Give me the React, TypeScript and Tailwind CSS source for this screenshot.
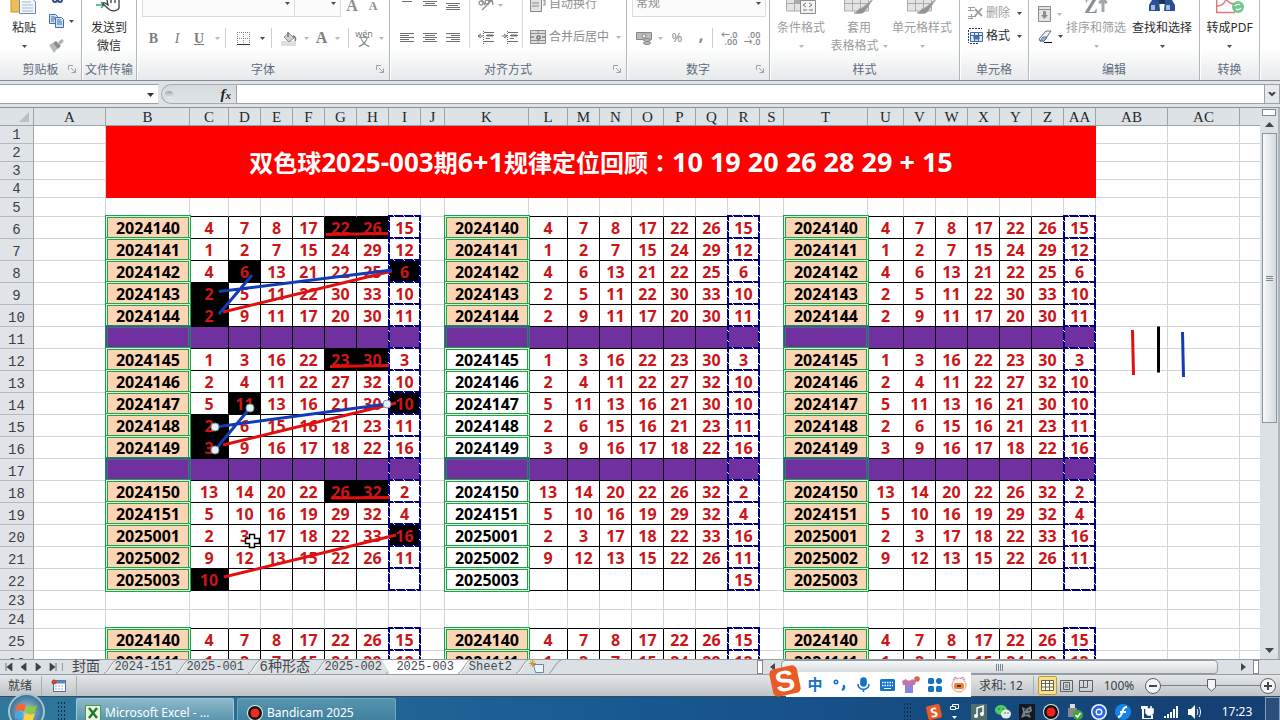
import type { ReactNode } from "react";

const columns = [
  ["A", 72], ["B", 84], ["C", 39], ["D", 32], ["E", 32], ["F", 32], ["G", 32], ["H", 32], ["I", 32], ["J", 24],
  ["K", 84], ["L", 39], ["M", 32], ["N", 32], ["O", 32], ["P", 32], ["Q", 32], ["R", 32], ["S", 24],
  ["T", 84], ["U", 36], ["V", 32], ["W", 32], ["X", 32], ["Y", 32], ["Z", 32], ["AA", 32], ["AB", 72], ["AC", 72],
] as const;

interface Draw {
  row: number;
  id: string;
  nums: (number | string)[];
}

const none = ["", "", "", "", "", "", ""];

const draws: Draw[] = [
  { row: 6, id: "2024140", nums: [4, 7, 8, 17, 22, 26, 15] },
  { row: 7, id: "2024141", nums: [1, 2, 7, 15, 24, 29, 12] },
  { row: 8, id: "2024142", nums: [4, 6, 13, 21, 22, 25, 6] },
  { row: 9, id: "2024143", nums: [2, 5, 11, 22, 30, 33, 10] },
  { row: 10, id: "2024144", nums: [2, 9, 11, 17, 20, 30, 11] },
  { row: 11, id: "", nums: none },
  { row: 12, id: "2024145", nums: [1, 3, 16, 22, 23, 30, 3] },
  { row: 13, id: "2024146", nums: [2, 4, 11, 22, 27, 32, 10] },
  { row: 14, id: "2024147", nums: [5, 11, 13, 16, 21, 30, 10] },
  { row: 15, id: "2024148", nums: [2, 6, 15, 16, 21, 23, 11] },
  { row: 16, id: "2024149", nums: [3, 9, 16, 17, 18, 22, 16] },
  { row: 17, id: "", nums: none },
  { row: 18, id: "2024150", nums: [13, 14, 20, 22, 26, 32, 2] },
  { row: 19, id: "2024151", nums: [5, 10, 16, 19, 29, 32, 4] },
  { row: 20, id: "2025001", nums: [2, 3, 17, 18, 22, 33, 16] },
  { row: 21, id: "2025002", nums: [9, 12, 13, 15, 22, 26, 11] },
  { row: 22, id: "2025003", nums: none },
  { row: 25, id: "2024140", nums: [4, 7, 8, 17, 22, 26, 15] },
  { row: 26, id: "2024141", nums: [1, 2, 7, 15, 24, 29, 12] },
];

// cells filled black in the first block, as row:index
const marked = new Set([
  "6:4", "6:5", "8:1", "8:6", "9:0", "10:0", "12:4", "12:5", "14:1", "14:6",
  "15:0", "16:0", "18:4", "18:5", "20:6", "22:0",
]);

const grid = "border-r border-b border-[#d3d6d9]";
const ui = "font-['Noto_Sans','Noto_Sans_CJK_SC',sans-serif]";
const mono = "font-['Liberation_Mono','Noto_Sans_CJK_SC',monospace]";

function Arrow({ dim = false }: { dim?: boolean }) {
  return (
    <svg width="5" height="3" viewBox="0 0 5 3" className="shrink-0">
      <path d="M0 0h5L2.5 3z" fill={dim ? "#b5b8bb" : "#4a4d50"} />
    </svg>
  );
}

function Group({ name, width, launcher, children }: { name: string; width: string; launcher?: boolean; children: ReactNode }) {
  return (
    <section className={`flex h-full shrink-0 flex-col border-r border-[#b3b8bd] shadow-[1px_0_0_#fff] ${width}`}>
      <div className="flex h-[59px] items-end">{children}</div>
      <div className="relative h-[21px] text-center text-[12px] leading-[22px] whitespace-nowrap text-[#5f6b7d]">
        {name}
        {launcher && (
          <button aria-label={`${name} 设置`} className="absolute right-[5px] bottom-[7px]">
            <svg width="8" height="8" viewBox="0 0 8 8" fill="none" stroke="#9aa1a8" className="block">
              <path d="M.5 5V.5H5M3 3l4 4M7.500 3.500v4h-4" />
            </svg>
          </button>
        )}
      </div>
    </section>
  );
}

function Tool({ label, w, children }: { label: string; w: string; children: ReactNode }) {
  return (
    <button aria-label={label} className={`flex h-full shrink-0 items-center justify-center ${w}`}>
      {children}
    </button>
  );
}

function Sep() {
  return <span className="h-5 w-px shrink-0 bg-[#cdd0d3]" />;
}

function Lines({ rows }: { rows: [number, number][] }) {
  return (
    <svg width="14" height="12" viewBox="0 0 14 12" stroke="#6d7073">
      {rows.map(([a, b], i) => (
        <path key={i} d={`M${a} ${i * 2 + 1.5}H${b}`} />
      ))}
    </svg>
  );
}

function Big({ label, second, w, dim, children }: { label: string; second?: string; w: string; dim?: boolean; children: ReactNode }) {
  return (
    <button className={`flex h-[59px] shrink-0 flex-col items-center text-[12px] leading-[18px] whitespace-nowrap ${w} ${dim ? "text-[#9a9da0]" : "text-[#2b2b2b]"}`}>
      <span className="flex h-[19px] items-start">{children}</span>
      <span>{label}</span>
      <span className="flex h-[18px] items-center gap-1">
        {second}
        {second !== "微信" && <Arrow dim={dim} />}
      </span>
    </button>
  );
}

function StyleIcon({ brush }: { brush?: boolean }) {
  return (
    <svg width="30" height="14" viewBox="0 0 30 14" fill="#e4e4e4" stroke="#a9acaf">
      <path d="M.5 -3v14h24v-14M.5 3.500h24M8.500 -3v14M16.500 -3v14" />
      {brush ? (
        <path d="M29 -1l-11 9c-4 0-4 4-8 5 4 1 9 1 11-2z" fill="#909396" />
      ) : (
        <>
          <path d="M9 -3h7v6H9z" fill="#aaa" />
          <path d="M14.500 .5h15v13h-15z" fill="#f3f3f3" stroke="#8c8f92" />
          <path d="M20 3l-3 2 3 2M17 10h4M23 3l3 2-3 2M23 10h4" fill="none" stroke="#777" />
        </>
      )}
    </svg>
  );
}

function Ribbon() {
  return (
    <header className={`flex h-[81px] shrink-0 overflow-hidden border-b border-[#868c92] bg-linear-to-b from-white from-60% to-[#e6e9eb] ${ui}`}>
      <Group name="剪贴板" width="w-[82px]" launcher>
        <Big label="粘贴" w="w-[48px]">
          <svg width="28" height="15" viewBox="0 0 28 15">
            <path d="M1 -2h9v14H1z" fill="#efbd55" stroke="#c99530" />
            <path d="M9.500 -2h12l4 4v11.500h-16z" fill="#f4f8fd" stroke="#7089a8" />
            <path d="M12 2h9M12 5h11M12 8h11M12 11h11" stroke="#9fb5d2" />
          </svg>
        </Big>
        <div className="flex h-[59px] w-[30px] flex-col justify-between pb-[5px]">
          <svg width="18" height="4" viewBox="0 0 18 4" fill="none" stroke="#334a85" strokeWidth="2">
            <circle cx="7" cy="0" r="2" />
            <circle cx="12" cy="0" r="2" />
          </svg>
          <button aria-label="复制" className="flex items-center gap-1">
            <svg width="17" height="14" viewBox="0 0 17 14" fill="#d3e4f8" stroke="#3f6fae">
              <path d="M1.500 .5h6l2 2v7h-8z" />
              <path d="M3 3h4M3 5h4M3 7h3" />
              <path d="M7.500 3.500h6l2 2v8h-8z" />
              <path d="M9 6h4M9 8h5M9 10h5" />
            </svg>
            <Arrow />
          </button>
          <button aria-label="格式刷">
            <svg width="17" height="16" viewBox="0 0 17 16">
              <path d="M1 7l4-2 5 5-4 5z" fill="#b7b9bb" />
              <path d="M5 5l3-2 5 5-3 3z" fill="#888b8e" />
              <path d="M10 4l4-3 2 2-4 4z" fill="#b0b3b6" />
            </svg>
          </button>
        </div>
      </Group>
      <Group name="文件传输" width="w-[55px]">
        <Big label="发送到" second="微信" w="w-[54px]">
          <svg width="28" height="12" viewBox="0 0 28 12" fill="none" stroke="#3a3d40" strokeWidth="1.300">
            <path d="M1 5h8M6 2l3 3-3 3" stroke="#43a573" strokeWidth="1.600" />
            <path d="M12 0l1 5-3-2c-2-1-3 1-1 2l6 5c3 1.500 8 1 9-2V0M16 0v3M20 0v3" />
          </svg>
        </Big>
      </Group>
      <Group name="字体" width="w-[253px]" launcher>
        <div className="flex h-[59px] flex-col pl-[5px]">
          <div className="flex h-[17px] text-[#8a8d90]">
            <div className="relative">
              <select aria-label="字体名称" className="block h-[17px] w-[153px] appearance-none border border-t-0 border-[#dadcde] bg-[#fbfbfb]" />
              <span className="absolute top-[2px] right-[5px] flex"><Arrow /></span>
            </div>
            <div className="relative">
              <select aria-label="字号" className="block h-[17px] w-[46px] appearance-none border border-t-0 border-l-0 border-[#dadcde] bg-[#fbfbfb]" />
              <span className="absolute top-[2px] right-[5px] flex"><Arrow /></span>
            </div>
            <button aria-label="增大字号" className="h-[12px] w-[22px] font-['Liberation_Serif',serif] text-[16px] leading-[8px] font-bold">A</button>
            <button aria-label="减小字号" className="h-[12px] w-[20px] font-['Liberation_Serif',serif] text-[12px] leading-[12px] font-bold">A</button>
          </div>
          <div className="mt-[10px] flex h-[22px] items-center font-['Liberation_Serif',serif] text-[14px] text-[#7b7e81]">
            <Tool label="加粗" w="w-[23px]"><b>B</b></Tool>
            <Tool label="倾斜" w="w-[24px]"><i>I</i></Tool>
            <Tool label="下划线" w="w-[20px]"><b className="underline">U</b></Tool>
            <Tool label="下划线样式" w="w-[16px]"><Arrow dim /></Tool>
            <Sep />
            <Tool label="边框" w="w-[34px]">
              <svg width="13" height="13" viewBox="0 0 13 13" fill="none" stroke="#85888b" strokeDasharray="1 1">
                <path d="M.5 0v12M6.500 0v12M12.500 0v12M0 .5h13M0 6.500h13" />
                <path d="M0 12.500h13" stroke="#333" strokeDasharray="none" />
              </svg>
            </Tool>
            <Tool label="边框样式" w="w-[4px]"><Arrow /></Tool>
            <span className="w-[7px]" />
            <Sep />
            <Tool label="填充颜色" w="w-[32px]">
              <svg width="17" height="15" viewBox="0 0 17 15">
                <path d="M1 10h15v5H1z" fill="#dedede" />
                <path d="M4 6l5-4 5 5-5 4z" fill="#d2d2d2" stroke="#8b8e91" />
                <path d="M8 1v5M13 5c3 1 3 3 2 5" fill="none" stroke="#777" strokeWidth="1.500" />
              </svg>
            </Tool>
            <Tool label="填充样式" w="w-[4px]"><Arrow dim /></Tool>
            <Tool label="字体颜色" w="w-[27px]"><b className="text-[16px]">A</b></Tool>
            <Tool label="字体颜色样式" w="w-[4px]"><Arrow dim /></Tool>
            <span className="w-[9px]" />
            <Sep />
            <Tool label="拼音" w="w-[30px]">
              <span className={`flex flex-col items-center text-[12px] leading-[9px] ${ui}`}>
                <span className="text-[9px] leading-[7px]">wén</span>文
              </span>
            </Tool>
            <Arrow dim />
          </div>
        </div>
      </Group>
      <Group name="对齐方式" width="w-[237px]" launcher>
        <div className="flex h-[59px] pl-[5px] text-[12px] text-[#8b8e91]">
          <div className="flex w-[74px] flex-col">
            <div className="flex h-[27px] items-start">
              <Tool label="顶端对齐" w="w-[23px]"><span className="mb-5"><Lines rows={[[0, 14], [2, 12]]} /></span></Tool>
              <Tool label="垂直居中" w="w-[24px]"><span className="mb-4"><Lines rows={[[0, 14], [2, 12], [0, 14]]} /></span></Tool>
              <Tool label="底端对齐" w="w-[22px]"><span className="mb-3"><Lines rows={[[0, 14], [2, 12], [0, 14], [0, 14]]} /></span></Tool>
            </div>
            <div className="flex h-[22px]">
              <Tool label="左对齐" w="w-[23px]"><Lines rows={[[0, 14], [0, 9], [0, 14], [0, 9], [0, 14]]} /></Tool>
              <Tool label="居中" w="w-[24px]"><Lines rows={[[0, 14], [2, 12], [0, 14], [2, 12], [0, 14]]} /></Tool>
              <Tool label="右对齐" w="w-[22px]"><Lines rows={[[0, 14], [5, 14], [0, 14], [5, 14], [0, 14]]} /></Tool>
            </div>
          </div>
          <div className="flex h-[48px] w-[54px] flex-col justify-between border-r border-l border-[#d5d7d9]">
            <button aria-label="方向" className="flex items-center gap-1 pl-2">
              <svg width="16" height="11" viewBox="0 0 16 11" fill="none" stroke="#8b8e91" strokeWidth="1.300">
                <circle cx="3" cy="3" r="2" /><circle cx="9" cy="2" r="2" />
                <path d="M4 0l3 5M4 10L14 0M14 0l1 5M14 0l-4 1" />
              </svg>
              <Arrow dim />
            </button>
            <div className="flex h-[22px]">
              <Tool label="减少缩进量" w="w-[32px]">
                <svg width="16" height="13" viewBox="0 0 16 13" stroke="#6d7073"><path d="M6 1.500h10M8 4.500h8M8 7.500h4M6 10.500h10M0 5h5M3 3L0 5l3 2" fill="none" /><path d="M9 4.500h6" strokeWidth="2" /><path d="M5.500 0v13" strokeDasharray="1 1" /></svg>
              </Tool>
              <Tool label="增加缩进量" w="w-[16px]">
                <svg width="16" height="13" viewBox="0 0 16 13" stroke="#6d7073"><path d="M6 1.500h10M8 4.500h8M8 7.500h4M6 10.500h10M0 5h5M2 3l3 2-3 2" fill="none" /><path d="M9 4.500h6" strokeWidth="2" /><path d="M5.500 0v13" strokeDasharray="1 1" /></svg>
              </Tool>
            </div>
          </div>
          <div className="flex h-[48px] flex-col justify-between pl-[7px]">
            <button className="flex h-[11px] items-center gap-[3px] leading-[12px]">
              <svg width="16" height="12" viewBox="0 0 16 12" fill="#e3e3e3" stroke="#85888b"><path d="M.5 0v11.500h11V0M2 3h7M2 6h7M13 0h2v5h-2" /></svg>
              <span className="-mt-1">自动换行</span>
            </button>
            <button className="flex h-[22px] items-center gap-[3px]">
              <svg width="16" height="14" viewBox="0 0 16 14" fill="#ddd" stroke="#8b8e91"><path d="M.5 .5h15v13H.5zM.5 3.500h15M.5 10.500h15M8 .5v3M8 10.500v3" /><path d="M1 7h3M15 7h-3M7 6h3v3H7z" stroke="#4d5053" /></svg>
              合并后居中
              <span className="pl-1"><Arrow dim /></span>
            </button>
          </div>
        </div>
      </Group>
      <Group name="数字" width="w-[143px]" launcher>
        <div className="flex h-[59px] flex-col pl-[5px] text-[#8b8e91]">
          <div className="relative h-[17px] w-[134px] overflow-hidden">
            <select aria-label="数字格式" className="absolute bottom-0 h-7 w-full appearance-none border border-[#dadcde] bg-[#fbfbfb] pl-[3px] text-[12px] leading-[16px]">
              <option>常规</option>
            </select>
            <span className="absolute top-[2px] right-[5px] flex"><Arrow /></span>
          </div>
          <div className="mt-[10px] flex h-[22px] items-center text-[13px]">
            <Tool label="会计数字格式" w="w-[24px]">
              <svg width="16" height="15" viewBox="0 0 16 15" fill="#bbb" stroke="#85888b"><path d="M.5 1.500h15v7H.5z" /><circle cx="8" cy="5" r="2" fill="#eee" /><ellipse cx="11" cy="9" rx="3.500" ry="1.500" /><ellipse cx="11" cy="12" rx="3.500" ry="1.500" /></svg>
            </Tool>
            <Tool label="会计样式" w="w-[8px]"><Arrow dim /></Tool>
            <Tool label="百分比样式" w="w-[26px]">%</Tool>
            <Tool label="千位分隔样式" w="w-[22px]"><b className="pb-2 text-[18px] leading-[12px]">,</b></Tool>
            <Sep />
            <Tool label="增加小数位数" w="w-[32px]"><span className="text-right text-[9px] leading-[7px] font-semibold">←.0<br />.00</span></Tool>
            <Tool label="减少小数位数" w="w-[14px]"><span className="text-right text-[9px] leading-[7px] font-semibold">.00<br />→.0</span></Tool>
          </div>
        </div>
      </Group>
      <Group name="样式" width="w-[190px]">
        <Big label="条件格式" w="w-[62px]" dim><StyleIcon /></Big>
        <Big label="套用" second="表格格式" w="w-[54px]" dim><StyleIcon brush /></Big>
        <Big label="单元格样式" w="w-[72px]" dim><StyleIcon brush /></Big>
      </Group>
      <Group name="单元格" width="w-[69px]">
        <div className="flex h-[59px] flex-col pt-[3px] pl-[7px] text-[12px] leading-[20px]">
          <button className="flex items-center gap-[3px] text-[#9a9da0]">
            <svg width="16" height="14" viewBox="0 0 16 14" fill="none" stroke="#9a9da0"><path d="M1 1.500h7M1 4.500h6M3.500 1v3M1 10.500h8M4.500 8v5M1 12.500h5" /><path d="M8 3l7 7M15 2l-7 8" strokeWidth="1.800" /></svg>
            删除
            <span className="pl-1"><Arrow /></span>
          </button>
          <button className="mt-[3px] flex items-center gap-[3px] text-[#2b2b2b]">
            <svg width="16" height="16" viewBox="0 0 16 16" fill="#dfeaf8" stroke="#44699d"><path d="M3.500 4.500h12v9h-12zM3.500 7.500h12M7.500 4.500v9M11.500 4.500v9" /><path d="M2 .500h13M1.500 2v13M3 15.500h9" stroke="#233a63" strokeDasharray="2 1" /><path d="M7 8h5v3H7z" fill="#3e72bd" /></svg>
            格式
            <span className="pl-1"><Arrow /></span>
          </button>
        </div>
      </Group>
      <Group name="编辑" width="w-[171px]">
        <div className="flex h-[59px] w-[34px] flex-col gap-[8px] pt-[6px] pl-[9px]">
          <button aria-label="填充" className="flex items-center gap-[6px]">
            <svg width="13" height="16" viewBox="0 0 13 16" fill="#e4e4e4" stroke="#8b8e91"><path d="M.5 .5h12v15H.5zM.5 3.500h12" /><path d="M5 5h3v4h2l-3.500 4L3 9h2z" fill="#8b8e91" stroke="none" /></svg>
            <Arrow dim />
          </button>
          <button aria-label="清除" className="flex items-center gap-[6px]">
            <svg width="14" height="13" viewBox="0 0 14 13" fill="#f2f6fb" stroke="#5c6f89"><path d="M1 9l7-8h5L6 11H2z" /><path d="M2 11l4 0 3-4-4 0z" fill="#9fb6d4" /><path d="M6 12.500h8" stroke="#111" /></svg>
            <Arrow />
          </button>
        </div>
        <Big label="排序和筛选" w="w-[66px]" dim>
          <span className="font-['Liberation_Serif',serif] text-[20px] leading-[12px] font-bold text-[#8a8d90]">Z</span>
          <svg width="10" height="12" viewBox="0 0 10 12" stroke="#a4a7aa" strokeWidth="3" fill="none"><path d="M5 12V1M1 3l4-3 4 3" /></svg>
        </Big>
        <Big label="查找和选择" w="w-[66px]">
          <svg width="28" height="12" viewBox="0 0 28 12">
            <path d="M4 0h7l1 11H1V5zM17 0h7l3 5v6H16z" fill="#2b4f93" />
            <path d="M11 0h6v4h-6z" fill="#1d3260" />
            <path d="M3 5h4v5H3zM18 5h4v5h-4z" fill="#9bbcec" />
          </svg>
        </Big>
      </Group>
      <Group name="转换" width="w-[60px]">
        <Big label="转成PDF" w="w-[59px]">
          <svg width="28" height="14" viewBox="0 0 28 14" fill="none">
            <path d="M.7 0v12.500H19M.7 6C6 6 9 3 10-1c2 3 4 5 8 5" stroke="#e3767b" strokeWidth="1.400" />
            <circle cx="22" cy="7" r="6" fill="#6fc98f" />
            <path d="M19 6c1-2 4-2 5-1M25 8c-1 2-4 2-5 1" stroke="#fff" strokeWidth="1.300" />
          </svg>
        </Big>
      </Group>
    </header>
  );
}

function FormulaBar() {
  return (
    <div className="flex h-[27px] shrink-0 items-center border-b border-[#8b9197] bg-[#dfe3e7]">
      <div className="relative h-5 w-[159px] border-y border-r border-[#9ba1a7] border-r-[#dfe3e7] bg-white">
        <input aria-label="名称框" className="h-full w-[140px] px-1 text-[12px] outline-none" />
        <svg width="7" height="4" viewBox="0 0 7 4" className="absolute top-[8px] right-[4px]"><path d="M0 0h7L3.500 4z" fill="#333" /></svg>
      </div>
      <div className="ml-[2px] flex h-5 w-[76px] items-center justify-between rounded-l-full border border-r-[#9ba1a7] border-[#a5abb1] bg-linear-to-b from-[#d5dade] to-[#e0e4e7] pr-[5px] pl-[3px]">
        <span className="h-[7px] w-[8px] rounded-full bg-linear-to-b from-[#9da4aa] to-[#edf0f2]" />
        <button aria-label="插入函数" className="font-['Liberation_Serif',serif] text-[15px] leading-none font-bold text-[#222] italic">
          f<span className="text-[11px]">x</span>
        </button>
      </div>
      <input aria-label="编辑栏" className="h-5 min-w-0 flex-1 border-y border-[#9ba1a7] bg-white px-1 outline-none" />
      <button aria-label="展开编辑栏" className="flex h-5 w-[16px] items-center justify-center border border-[#9ba1a7] bg-[#e6e9ec]">
        <svg width="8" height="5" viewBox="0 0 8 5" fill="none" stroke="#444" strokeWidth="2"><path d="M1 0l3 3 3-3" /></svg>
      </button>
    </div>
  );
}

function RowHead({ n }: { n: number }) {
  return (
    <th scope="row" className={`border-r border-b border-[#b4babf] border-r-[#9da3a9] bg-[#e0e4e8] p-0 align-bottom text-[14px] leading-[16px] font-normal text-[#3c4043] ${mono}`}>
      {n}
    </th>
  );
}

function blockCells(draw: Draw, block: number) {
  const split = draw.id === "";
  const nums =
    draw.id !== "2025003" ? draw.nums
    : block === 0 ? [10, "", "", "", "", "", ""]
    : block === 1 ? ["", "", "", "", "", "", 15]
    : none;
  const plain = block === 1 && draw.row > 11 && draw.row < 23;
  const idFill = split ? "bg-[#7030a0]" : plain ? "bg-white" : "bg-[#fcd5b4]";
  const frame = split ? "border-[#2b7d74] bg-[#4f4f8c]" : "border-[#22a04c] bg-[#d2fbd9]";
  return [
    // the double frame straddles the grid line, so it reaches past the cell
    <td key={`${block}id`} className="relative p-0">
      <div className={`absolute -top-[2px] -right-px -bottom-px -left-px flex border p-px ${frame}`}>
        <div className={`flex flex-1 items-center justify-center border text-black ${split ? "border-[#2b7d74]" : "border-[#22a04c]"} ${idFill}`}>{draw.id}</div>
      </div>
    </td>,
    ...nums.map((n, i) => {
      const black = block === 0 && marked.has(`${draw.row}:${i}`);
      const fill = split ? "bg-[#7030a0]" : black ? "bg-black" : "bg-white";
      if (i === 6) {
        return (
          <td key={`${block}-6`} className="relative p-0">
            <div className={`absolute -top-[2px] right-0 bottom-0 -left-px flex items-center justify-center border-2 pt-px [border-image:repeating-linear-gradient(45deg,#00007c_0_6px,#e8e8ff_6px_7px)_2] ${fill}`}>
              {n}
            </div>
          </td>
        );
      }
      return (
        <td key={`${block}-${i}`} className={`border-r border-b border-black p-0 text-center ${fill}`}>
          {n}
        </td>
      );
    }),
  ];
}

function Sheet() {
  const blank = (key: string, cls = grid) => <td key={key} className={`p-0 ${cls}`} />;
  // rows just above a block carry its black top edge
  const spacer = (n: number) => {
    const top = n === 5 || n === 24;
    return columns.map(([name], i) => {
      const inBlock = (i > 0 && i < 9) || (i > 9 && i < 18) || (i > 18 && i < 27);
      return blank(name, top && inBlock ? "border-r border-b border-r-[#d3d6d9] border-b-black" : grid);
    });
  };
  const heights = (n: number) => (n < 5 ? "h-[18px]" : n === 5 || n === 23 || n === 24 ? "h-[19px]" : "h-[22px]");

  return (
    <table className="w-full table-fixed border-separate border-spacing-0 bg-white">
      <colgroup>
        <col style={{ width: 34 }} />
        {columns.map(([name, width]) => (
          <col key={name} style={{ width }} />
        ))}
        <col />
      </colgroup>
      <thead>
        <tr className="h-[18px]">
          <th aria-label="全选" className="border-r border-b border-[#9da3a9] bg-[#dde2e6] p-0">
            <svg width="10" height="10" viewBox="0 0 10 10" className="mr-1 ml-auto block"><path d="M10 0v10H0z" fill="#b9bfc5" /></svg>
          </th>
          {columns.map(([name]) => (
            <th key={name} scope="col" className="border-r border-b border-[#9da3a9] bg-[#dde2e6] p-0 align-bottom font-['Liberation_Serif',serif] text-[15px] leading-[15px] font-normal text-[#26292c]">
              {name}
            </th>
          ))}
          <th className="border-b border-[#9da3a9] bg-[#dde2e6] p-0" />
        </tr>
      </thead>
      <tbody className="font-['Noto_Sans','Noto_Sans_CJK_SC',sans-serif] text-[16px] leading-[20px] font-bold text-[#cb1517]">
        {Array.from({ length: 26 }, (_, k) => k + 1).map((n) => {
          const draw = draws.find((d) => d.row === n);
          return (
            <tr key={n} className={heights(n)}>
              <RowHead n={n} />
              {n < 5 && blank("A")}
              {n === 1 && (
                <td colSpan={26} rowSpan={4} className="bg-[#fe0000] p-0 text-center text-[24px] leading-[36px] whitespace-nowrap text-white">
                  双色球<span className="text-[26px]">2025-003</span>期<span className="text-[27px]">6+1</span>规律定位回顾
                  <span className="font-['Noto_Sans_CJK_TC',sans-serif]">：</span>
                  <span className="text-[27px]">10 19 20 26 28 29 + 15</span>
                </td>
              )}
              {n < 5 && [blank("AB"), blank("AC")]}
              {n > 4 && !draw && spacer(n)}
              {draw && [
                blank("A"),
                blockCells(draw, 0),
                blank("J"),
                blockCells(draw, 1),
                blank("S"),
                blockCells(draw, 2),
                blank("AB"),
                blank("AC"),
              ]}
              {blank("end", "border-b border-[#d3d6d9]")}
            </tr>
          );
        })}
      </tbody>
    </table>
  );
}

function DrawnLines() {
  return (
    <svg width="1260" height="552" viewBox="0 108 1260 552" className="pointer-events-none absolute top-0 left-0" fill="none" strokeWidth="3">
      <g stroke="#e01010">
        <path d="M326 234.500L388 233.500M330 366.500L389 365.500M331 498L390 497.500" />
        <path d="M223 312L392 271M223 445L396 403M224 577L396 535" />
        <path d="M1132.500 330L1133.500 375" />
      </g>
      <g stroke="#123cb4">
        <path d="M219 291.500L392 270M252 275L219 314" />
        <path d="M215 427L387 404M250 408L215 450" />
        <path d="M1182.500 332L1183.500 377" />
      </g>
      <path d="M1158.500 326.500V372.500" stroke="#000" />
      <g fill="#e2f1f5" stroke="#7f98a3" strokeWidth="1">
        <circle cx="215" cy="427" r="4" />
        <circle cx="387" cy="404" r="4" />
        <circle cx="250" cy="408" r="4" />
        <circle cx="215" cy="450" r="4" />
      </g>
      <path d="M249.500 534.500h5v4h5v5h-5v4h-5v-4h-4v-5h4z" fill="#fff" stroke="#000" strokeWidth="1.500" />
    </svg>
  );
}

function VerticalScroll() {
  return (
    <aside className="flex w-[20px] shrink-0 flex-col items-center border-r-2 border-[#aeb5bb] bg-[#dce1e5]">
      <span className="mt-px h-[7px] w-[14px] border border-[#7e858c] bg-white" />
      <button aria-label="向上滚动" className="flex h-[17px] w-full items-center justify-center">
        <svg width="9" height="5" viewBox="0 0 9 5"><path d="M0 5h9L4.500 0z" fill="#44484c" /></svg>
      </button>
      <span className="flex h-[290px] w-[15px] flex-col items-center justify-center gap-px border border-[#8d949b] bg-linear-to-r from-[#f7f9fa] to-[#d5dae0]">
        <i className="h-px w-[7px] bg-[#7e858c]" />
        <i className="h-px w-[7px] bg-[#7e858c]" />
        <i className="h-px w-[7px] bg-[#7e858c]" />
      </span>
      <button aria-label="向下滚动" className="mt-auto flex h-[17px] w-full items-center justify-center">
        <svg width="9" height="5" viewBox="0 0 9 5"><path d="M0 0h9L4.500 5z" fill="#44484c" /></svg>
      </button>
    </aside>
  );
}

const tabs = [
  { name: "封面", w: "w-[39px]", size: "text-[14px]" },
  { name: "2024-151", w: "w-[72px]", size: "text-[12px]" },
  { name: "2025-001", w: "w-[72px]", size: "text-[12px]" },
  { name: "6种形态", w: "w-[66px]", size: "text-[14px]" },
  { name: "2025-002", w: "w-[72px]", size: "text-[12px]" },
  { name: "2025-003", w: "w-[72px]", size: "text-[12px]", active: true },
  { name: "Sheet2", w: "w-[58px]", size: "text-[12px]" },
];

const navIcons = ["M1 0v8M7 0v8L2 4z", "M6 0v8L1 4z", "M2 0v8l5-4z", "M7 0v8M1 0v8l5-4z"];
const navNames = ["第一张", "上一张", "下一张", "最后一张"];

function TabBar() {
  return (
    <nav className="flex h-[16px] shrink-0 items-center border-y border-[#979da3] bg-[#dbe0e4]">
      <div className="flex w-[63px] shrink-0 items-center justify-around border-r border-[#979da3] px-[2px]">
        {navIcons.map((d, i) => (
          <button key={d} aria-label={navNames[i]}>
            <svg width="8" height="8" viewBox="0 0 8 8" fill="#3c4043" stroke="#3c4043" className="block" strokeWidth=".7"><path d={d} /></svg>
          </button>
        ))}
      </div>
      {tabs.map((t) => (
        <button
          key={t.name}
          className={`relative flex h-[14px] shrink-0 items-center justify-end whitespace-nowrap text-[#45494d] ${mono} ${t.w} ${t.size} ${t.active ? "z-10" : ""}`}
        >
          {t.active && (
            <svg width="90" height="14" viewBox="0 0 90 14" className="absolute top-0 -left-[2px]">
              <path d="M0 0L8 14H76L88 0z" fill="#fff" />
            </svg>
          )}
          <span className="relative mr-[2px] leading-[16px]">{t.name}</span>
          <svg width="12" height="14" viewBox="0 0 12 14" fill="none" className="absolute top-0 -right-[14px]">
            <path d="M0 13.500C4 13 8 1 12 0" stroke="#8b9298" />
            <path d="M2 13.500C5 13 9 2 12 1.500" stroke="#fff" />
          </svg>
        </button>
      ))}
      <button aria-label="插入工作表" className="flex h-[14px] w-[48px] shrink-0 items-center justify-end">
        <svg width="34" height="14" viewBox="0 0 34 14" fill="none">
          <path d="M5.500 4.500h10v8h-8z" fill="#eef4fb" stroke="#6b83a6" />
          <path d="M4.500 0v7M1 3.500h7M2 1l5 5M7 1l-5 5" stroke="#cf9a26" />
          <path d="M21 13.500C24 12 28 2 33 0" stroke="#8b9298" />
        </svg>
      </button>
      <div className="ml-auto flex h-full items-center">
        <span className="h-[14px] w-[6px] border border-[#7e858c] bg-white" />
        <button aria-label="向左滚动" className="flex h-full w-[18px] items-center justify-center">
          <svg width="5" height="8" viewBox="0 0 5 8"><path d="M5 0v8L0 4z" fill="#44484c" /></svg>
        </button>
        <span className="flex h-[14px] w-[437px] items-center justify-center gap-px rounded-sm border border-[#9299a0] bg-linear-to-b from-[#f6f8f9] to-[#d6dbdf]">
          {[0, 1, 2, 3].map((i) => (
            <i key={i} className="h-[7px] w-px bg-[#7e858c]" />
          ))}
        </span>
        <button aria-label="向右滚动" className="ml-[15px] flex h-full w-[20px] items-center justify-center">
          <svg width="5" height="8" viewBox="0 0 5 8"><path d="M0 0v8l5-4z" fill="#44484c" /></svg>
        </button>
        <span className="mr-[21px] h-[14px] w-[6px] border border-[#7e858c] bg-white" />
      </div>
    </nav>
  );
}

function InputMethod() {
  return (
    <div className={`absolute right-[309px] bottom-[23px] z-20 flex h-[25px] w-[185px] items-center bg-white pl-[17px] text-[#1573c5] ${ui}`}>
      <span className="absolute -top-[5px] -left-[15px] flex size-[28px] -rotate-12 items-center justify-center rounded-[5px] bg-[#ea5a24] font-['Liberation_Sans',sans-serif] text-[29px] leading-none font-bold text-white">
        S
      </span>
      <button className="w-6 text-[15px] leading-none font-bold">中</button>
      <button aria-label="标点" className="flex w-6 justify-center">
        <svg width="13" height="12" viewBox="0 0 13 12" fill="none" stroke="currentColor" strokeWidth="1.600"><circle cx="3" cy="3" r="1.700" /><path d="M10 6.500c2 1 1 3.500-1 4.500" strokeWidth="2.500" /></svg>
      </button>
      <button aria-label="语音" className="flex w-6 justify-center">
        <svg width="13" height="16" viewBox="0 0 13 16" fill="none" stroke="currentColor" strokeWidth="1.600"><rect x="4" y="1" width="5" height="8" rx="2.500" fill="currentColor" /><path d="M1 7c0 7 11 7 11 0M6.500 12v3" /></svg>
      </button>
      <button aria-label="键盘" className="flex w-6 justify-center">
        <svg width="15" height="12" viewBox="0 0 15 12"><rect width="15" height="12" rx="1.500" fill="currentColor" /><path d="M2 3.500h11M2 6.500h11" stroke="#fff" strokeWidth="1.500" strokeDasharray="1.500 1" /><path d="M4 9.500h7" stroke="#fff" /></svg>
      </button>
      <button aria-label="皮肤" className="flex w-6 justify-center">
        <svg width="18" height="18" viewBox="0 0 18 18"><defs><linearGradient id="shirt" x2="0" y2="1"><stop stopColor="#d96c9a" /><stop offset="1" stopColor="#6d8df2" /></linearGradient></defs><path d="M0 5l4-2c1 2 5 2 6 0l4 2-1 4h-2v8H3V9H1z" fill="url(#shirt)" /><circle cx="15" cy="3" r="2.800" fill="#e5604c" /></svg>
      </button>
      <button aria-label="工具箱" className="flex w-6 justify-center">
        <svg width="14" height="14" viewBox="0 0 14 14" fill="currentColor"><rect width="6" height="6" rx="1.500" /><circle cx="11" cy="3" r="3" /><rect y="8" width="6" height="6" rx="1.500" /><rect x="8" y="8" width="6" height="6" rx="1.500" /></svg>
      </button>
      <button aria-label="助手" className="flex w-6 justify-center">
        <svg width="16" height="17" viewBox="0 0 16 17"><circle cx="8" cy="9" r="7" fill="#fff4ee" stroke="#e79a8d" /><path d="M2 4l2-3 3 2M14 4l-2-3-3 2" fill="none" stroke="#9c9ad4" /><rect x="3" y="7" width="10" height="6" rx="2" fill="#ee8233" /><rect x="6" y="9" width="4" height="2" fill="#5b2c15" /></svg>
      </button>
    </div>
  );
}

function StatusBar() {
  return (
    <footer className={`flex h-[22px] shrink-0 items-center border-b border-[#3b4a58] bg-linear-to-b from-[#e4e7e9] to-[#bfc4c8] text-[12px] whitespace-nowrap text-[#3b3e41] ${ui}`}>
      <span className="w-[42px] shrink-0 border-r border-[#a9aeb3] pl-2 leading-[20px]">就绪</span>
      <button aria-label="录制宏" className="flex h-5 w-[35px] shrink-0 items-center justify-center border-r border-[#a9aeb3]">
        <svg width="16" height="13" viewBox="0 0 16 13"><rect x="2.500" y="1.500" width="12" height="11" fill="#fff" stroke="#5470a5" /><path d="M3 3h11" stroke="#5b83c8" strokeWidth="3" /><path d="M4 7h9M4 10h9" stroke="#8ea6cf" strokeDasharray="2 1" /><circle cx="3" cy="3" r="2.500" fill="#c8442e" /></svg>
      </button>
      <span className="ml-auto pr-[10px]">求和: 12</span>
      <div className="flex items-center border-l border-[#a9aeb3] pl-[4px]">
        <button aria-label="普通" className="flex size-[19px] items-center justify-center rounded-xs border border-[#c09a35] bg-[#fae08c]">
          <svg width="13" height="11" viewBox="0 0 13 11" fill="#fff" stroke="#6b6545"><path d="M.5 .5h12v10H.5zM.5 3.500h12M.5 7h12M4.500 .5v10M8.500 .5v10" /></svg>
        </button>
        <button aria-label="页面布局" className="flex w-[19px] justify-center">
          <svg width="13" height="12" viewBox="0 0 13 12" fill="none" stroke="#5d6165"><path d="M.5 .5h12v11H.5zM3.500 2.500h6v7h-6zM5 5h3M5 7h3" /></svg>
        </button>
        <button aria-label="分页预览" className="flex w-[19px] justify-center">
          <svg width="14" height="12" viewBox="0 0 14 12" fill="none" stroke="#5d6165"><path d="M.5 .5h13v11H.5zM4.500 0v7M8.500 0v7M.5 7.500h8" /></svg>
        </button>
      </div>
      <span className="w-[50px] pr-[2px] text-center">100%</span>
      <button aria-label="缩小" className="flex size-[16px] items-center justify-center rounded-full border border-[#5d6165] bg-[#f3f4f5]">
        <i className="h-[2px] w-2 bg-[#44484c]" />
      </button>
      <div className="relative flex h-[16px] w-[99px] items-center">
        <span className="h-px w-full bg-[#7b8085]" />
        <svg width="9" height="13" viewBox="0 0 9 13" className="absolute left-[46px]"><path d="M.5 .5h8v8L4.500 12 .5 8.500z" fill="#f4f5f6" stroke="#5d6165" /></svg>
      </div>
      <button aria-label="放大" className="mr-[4px] flex size-[16px] items-center justify-center rounded-full border border-[#5d6165] bg-[#f3f4f5]">
        <svg width="8" height="8" viewBox="0 0 8 8" stroke="#44484c" strokeWidth="2"><path d="M0 4h8M4 0v8" /></svg>
      </button>
    </footer>
  );
}

function Dots() {
  return <span className="block h-[19px] w-[9px] shrink-0 bg-[radial-gradient(#0b2c4d_1px,transparent_1px)] bg-[size:3px_4px]" />;
}

const trayIcons: [string, ReactNode][] = [
  ["音乐", <><rect width="16" height="16" fill="#50706c" /><path d="M6 12V4l6-2v8" fill="none" stroke="#fff" strokeWidth="1.500" /><circle cx="5" cy="12" r="2" fill="#fff" /><circle cx="11" cy="10" r="2" fill="#fff" /></>],
  ["微信", <><ellipse cx="6" cy="6" rx="6" ry="5" fill="#4ecb64" /><ellipse cx="11" cy="10" rx="5" ry="4.500" fill="#e3efe4" /><circle cx="4" cy="5" r=".8" fill="#164" /><circle cx="8" cy="5" r=".8" fill="#164" /><circle cx="10" cy="9" r=".7" fill="#444" /><circle cx="13" cy="9" r=".7" fill="#444" /></>],
  ["游戏", <><rect width="16" height="16" fill="#15191f" /><path d="M3 3l4 2 5-3 1 5-3 2 2 5-5-2-5 2 2-6z" fill="#76828e" /><path d="M5 6h2M9 6h2M6 10h4" stroke="#111" /></>],
  ["Bandicam", <><circle cx="8" cy="8" r="8" fill="#e8e8e8" /><circle cx="8" cy="8" r="7" fill="#111" /><circle cx="8" cy="8" r="4.500" fill="#f52222" /></>],
  ["USB", <><path d="M3 0h5v4H3z" fill="#ddd" /><path d="M1 4h9v9H1z" fill="#85898d" /><circle cx="11" cy="11" r="5" fill="#3fa63c" /><path d="M8.500 11l2 2 3-4" fill="none" stroke="#fff" strokeWidth="1.500" /></>],
  ["浏览器", <><circle cx="8" cy="8" r="8" fill="#f0f5ff" /><circle cx="8" cy="8" r="5" fill="none" stroke="#2b64dd" strokeWidth="3" /><circle cx="8" cy="8" r="2" fill="#2b64dd" /></>],
  ["Flash", <><circle cx="8" cy="8" r="8" fill="#1683ea" /><path d="M12 3c-4 0-4 3-5 6-1 3-2 4-4 4M5 8h6" fill="none" stroke="#fff" strokeWidth="2" /></>],
  ["电源", <><path d="M2 2h6v3H5v9h7v-3h2v4H3V5H2z" fill="#fff" /><path d="M7 5h7v4l-2 2H9L7 9zM8 2v3M12 2v3" fill="#fff" stroke="#fff" strokeWidth="1.500" /></>],
  ["网络", <path d="M1 14v-2h2v2zM4 14v-4h2v4zM7 14V8h2v6zM10 14V5h2v9zM13 14V2h2v12z" fill="#fff" />],
  ["音量", <><path d="M1 5h3l4-4v14l-4-4H1z" fill="#fff" /><path d="M10 5c1 2 1 4 0 6M12 3c2 3 2 7 0 10" fill="none" stroke="#fff" /></>],
];

function Taskbar() {
  return (
    <div className={`relative flex h-[23px] shrink-0 items-start bg-linear-to-r from-[#2f789c] via-[#185890] to-[#143e70] text-[12px] text-white ${ui}`}>
      <button aria-label="开始" className="absolute -top-[4px] left-[8px] z-10 flex size-[37px] items-center justify-center rounded-full border-2 border-[#a5c5d4] bg-radial from-[#9bd1e5] to-[#1c4e74]">
        <svg width="24" height="22" viewBox="0 0 24 22">
          <path d="M2 4c4-2 6-2 9 0L9 11C6 9 4 9 0 11z" fill="#f0673a" />
          <path d="M12 4c4 2 6 2 10 0l-2 7c-4 2-6 2-10 0z" fill="#8fc93f" />
          <path d="M0 12c3-2 5-2 8 0l-2 7c-3-2-5-2-8 0z" fill="#45a8e8" />
          <path d="M10 12c3 2 6 2 10 0l-2 7c-4 2-6 2-10 0z" fill="#fbd33e" />
        </svg>
      </button>
      <span className="ml-[57px] pt-[4px]"><Dots /></span>
      <div className="ml-[10px] flex h-full gap-[3px] overflow-hidden pt-px">
        <button className="flex h-[28px] w-[158px] items-center gap-[4px] rounded-t-xs border border-b-0 border-[#9fc9d8] bg-linear-to-b from-[#8db9ca] to-[#4c8ba6] pl-[8px] text-[12px] whitespace-nowrap">
          <svg width="16" height="16" viewBox="0 0 16 16" className="shrink-0"><rect x=".5" y=".5" width="15" height="15" fill="#e8f4e4" stroke="#4f9a45" /><path d="M4 3l8 10M12 3L4 13" stroke="#267a2b" strokeWidth="2.500" /></svg>
          Microsoft Excel - ...
        </button>
        <button className="flex h-[28px] w-[159px] items-center gap-[4px] rounded-t-xs border border-b-0 border-[#6fa5bd] bg-linear-to-b from-[#5794ae] to-[#3a7c9b] pl-[9px] text-[12px] whitespace-nowrap">
          <svg width="16" height="16" viewBox="0 0 16 16" className="shrink-0"><circle cx="8" cy="8" r="8" fill="#eee" /><circle cx="8" cy="8" r="7" fill="#151515" /><circle cx="8" cy="8" r="4.500" fill="#f52a20" /></svg>
          Bandicam 2025
        </button>
      </div>
      <div className="ml-auto flex h-full items-center overflow-hidden pt-[6px]">
        <Dots />
        <span className="ml-[15px] flex size-[14px] -rotate-12 items-center justify-center rounded-xs bg-[#ea5a24] text-[13px] leading-none font-bold">S</span>
        <button aria-label="显示隐藏的图标" className="flex w-[26px] justify-center">
          <svg width="9" height="16" viewBox="0 0 9 16" fill="none" stroke="#fff"><path d="M2.500 3V.5h6v4H6M.5 2.500h5v3h-5z" /><path d="M2 12h5l-2.500 3z" fill="#fff" stroke="none" /></svg>
        </button>
        {trayIcons.map(([name, icon]) => (
          <button key={name} aria-label={name} className="flex w-6 justify-center">
            <svg width="16" height="16" viewBox="0 0 16 16">{icon}</svg>
          </button>
        ))}
        <time className="w-[58px] pl-[2px] text-center">17:23</time>
      </div>
      <button aria-label="显示桌面" className="h-full w-[15px] border border-b-0 border-[#7ba0bd] bg-[#2b4f78]" />
    </div>
  );
}

export default function App() {
  return (
    <div className="relative flex h-screen flex-col overflow-hidden bg-white">
      <Ribbon />
      <FormulaBar />
      <main className="flex min-h-0 flex-1">
        <div className="relative min-w-0 flex-1 overflow-hidden">
          <Sheet />
          <DrawnLines />
        </div>
        <VerticalScroll />
      </main>
      <TabBar />
      <StatusBar />
      <Taskbar />
      <InputMethod />
    </div>
  );
}
